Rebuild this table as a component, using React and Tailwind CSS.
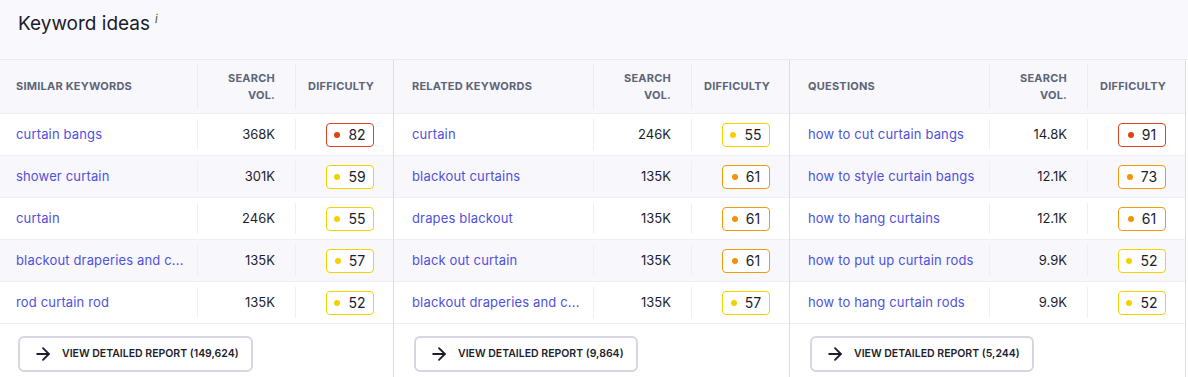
import { ArrowRight } from "lucide-react";

const panels = [
  {
    title: "SIMILAR KEYWORDS",
    width: "w-[394px]",
    pad: "pl-[16px]",
    total: "149,624",
    rows: [
      ["curtain bangs", "368K", 82],
      ["shower curtain", "301K", 59],
      ["curtain", "246K", 55],
      ["blackout draperies and c...", "135K", 57],
      ["rod curtain rod", "135K", 52],
    ],
  },
  {
    title: "RELATED KEYWORDS",
    width: "w-[396px]",
    pad: "pl-[18px]",
    total: "9,864",
    rows: [
      ["curtain", "246K", 55],
      ["blackout curtains", "135K", 61],
      ["drapes blackout", "135K", 61],
      ["black out curtain", "135K", 61],
      ["blackout draperies and c...", "135K", 57],
    ],
  },
  {
    title: "QUESTIONS",
    width: "w-[396px]",
    pad: "pl-[18px]",
    total: "5,244",
    rows: [
      ["how to cut curtain bangs", "14.8K", 91],
      ["how to style curtain bangs", "12.1K", 73],
      ["how to hang curtains", "12.1K", 61],
      ["how to put up curtain rods", "9.9K", 52],
      ["how to hang curtain rods", "9.9K", 52],
    ],
  },
];

function Badge({ value }) {
  let tone = "border-[#f3d200]";
  let dot = "bg-[#f5d000]";
  if (value >= 80) {
    tone = "border-[#dd4320]";
    dot = "bg-[#e43e12]";
  } else if (value >= 60) {
    tone = "border-[#f39a0c]";
    dot = "bg-[#f5920a]";
  }
  return (
    <span className={`inline-flex h-[24px] w-[48px] items-center justify-center gap-[8px] rounded-[4px] border bg-white ${tone}`}>
      <span className={`h-[6px] w-[6px] rounded-full ${dot}`} />
      <span className="text-[14px] text-[#1d1d2c]">{value}</span>
    </span>
  );
}

function Panel({ panel }) {
  return (
    <div className={`flex shrink-0 flex-col border-r border-[#dddce6] ${panel.width}`}>
      <div className="grid h-[53px] grid-cols-[1fr_98px_98px] bg-[#f8f7fc] text-[11px] font-bold tracking-[0.02em] text-[#5c6577]">
        <div className={`flex items-center ${panel.pad}`}>{panel.title}</div>
        <div className="my-[4px] flex items-center justify-end border-l border-[#eceaf3] pr-[20px] text-right leading-[17px]">
          SEARCH
          <br />
          VOL.
        </div>
        <div className="my-[4px] flex items-center border-l border-[#eceaf3] pl-[12px]">DIFFICULTY</div>
      </div>
      {panel.rows.map(([kw, vol, diff], i) => (
        <div
          key={i}
          className={`grid h-[42px] grid-cols-[1fr_98px_98px] border-t border-[#efeef5] ${i % 2 ? "bg-[#f8f7fc]" : "bg-white"}`}
        >
          <div className={`flex items-center overflow-hidden whitespace-nowrap text-[13px] tracking-[0.012em] text-[#4f51dc] ${panel.pad}`}>
            {kw}
          </div>
          <div className="my-[5px] flex items-center justify-end border-l border-[#efeef5] pr-[20px] text-[13px] text-[#1d1d2c]">
            {vol}
          </div>
          <div className="my-[5px] flex items-center justify-end border-l border-[#efeef5] pr-[19px]">
            <Badge value={diff} />
          </div>
        </div>
      ))}
      <div className={`flex flex-1 items-start border-t border-[#efeef5] bg-white pt-[12px] ${panel.pad === "pl-[16px]" ? "pl-[18px]" : "pl-[20px]"}`}>
        <button className="flex h-[36px] items-center gap-[9px] rounded-[6px] border-2 border-[#d6d5e2] bg-white pl-[13px] pr-[12px] text-[10.5px] font-semibold text-[#1d1d2c]">
          <ArrowRight size={20} strokeWidth={2.2} className="text-[#1d1d2c]" />
          VIEW DETAILED REPORT ({panel.total})
        </button>
      </div>
    </div>
  );
}

export default function App() {
  return (
    <div className="h-[377px] w-[1188px] overflow-hidden bg-white font-['Inter',sans-serif]">
      <div className="flex h-[60px] items-start border-b border-[#ebe9f2] bg-[#f9f8fc] pl-[18px] pt-[10px]">
        <span className="text-[19px] text-[#1b1b2a]">Keyword ideas</span>
        <span className="ml-[5px] mt-[1px] text-[11px] italic text-[#444]">i</span>
      </div>
      <div className="flex h-[317px]">
        {panels.map((p) => (
          <Panel key={p.title} panel={p} />
        ))}
      </div>
    </div>
  );
}
